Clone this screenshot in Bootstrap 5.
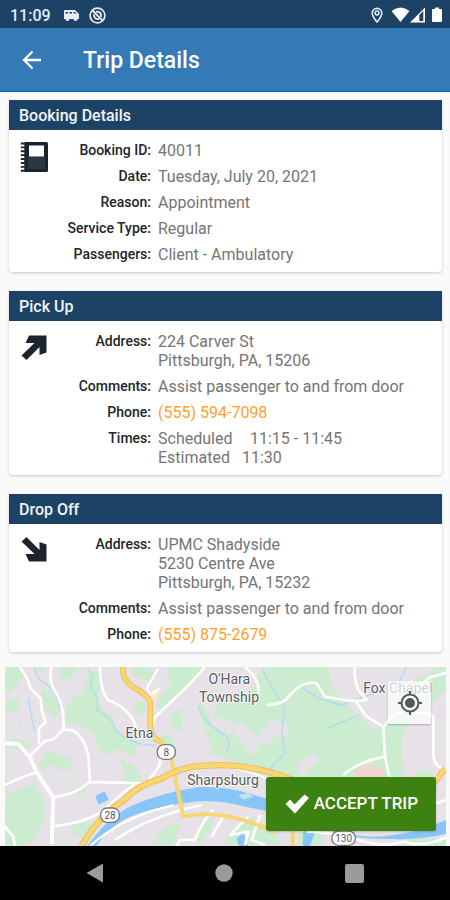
<!DOCTYPE html>
<html lang="en">
<head>
<meta charset="utf-8">
<meta name="viewport" content="width=device-width, initial-scale=1">
<title>Trip Details</title>
<link href="https://cdn.jsdelivr.net/npm/bootstrap@5.3.0/dist/css/bootstrap.min.css" rel="stylesheet">
<style>
body { font-family: Roboto, "Liberation Sans", sans-serif; font-size: 16px; line-height: 19px; background: #fafafa; color: #757575; }
svg { display: block; }
.status-bar { background: #1c4366; color: #fff; height: 28px; padding: 2px 8px 0 10px; }
.status-bar .clock { font-size: 16px; font-weight: 500; color: #e3ebf2; }
.notices { margin-left: 12px; gap: 9px; }
.signals { gap: 6px; }
.app-bar { background: #337ab7; height: 64px; padding: 0 20px; border-bottom: 1px solid #1766aa; gap: 39px; }
.app-bar h1 { font-size: 23px; line-height: 28px; padding-top: 2px; font-weight: 500; color: #fff; }
.trip-list { padding: 8px 8px 15px 9px; gap: 19px; }
.trip-card { border: 0; border-radius: 4px; box-shadow: 0 1px 3px rgba(0,0,0,.2); }
.trip-card .card-header { background: #1c4366; color: #f1f5f9; border: 0; border-radius: 0; font-size: 16px; line-height: 20px; padding: 6px 10px 4px; }
.trip-card .card-body { padding: 11px 8px 8px 10px; }
.card-icon { width: 32px; }
.detail-list { gap: 7px; }
.detail-list dt { width: 102px; padding-right: 2px; text-align: right; font-size: 14px; font-weight: 500; color: #212529; }
.detail-row { gap: 5px; }
.detail-list dd, .detail-list dt { margin: 0; }
.phone-link { color: #ffa02f; text-decoration: none; }
.time-name { display: inline-block; width: 84px; }
.time-name.full { width: 92px; }
.map-area { margin: 0 4px 0 5px; min-height: 179px; }
.map-drawing { width: 100%; min-height: 179px; }
.locate-btn { top: 14px; right: 15px; width: 43px; height: 43px; padding: 0; border: 0; border-radius: 2px; background: rgba(255,255,255,.72); box-shadow: 0 1px 2px rgba(0,0,0,.25); }
.accept-btn { right: 10px; bottom: 15px; height: 54px; padding: 0 18px; gap: 4px; border: 0; border-radius: 3px; background: #3d8111; color: #fff; font-size: 17px; font-weight: 500; box-shadow: 0 1px 2px rgba(0,0,0,.2); }
.accept-btn:hover { background: #34700e; color: #fff; }
.system-nav { background: #000; height: 54px; padding: 0 30px; }
.bare-btn { background: none; border: 0; padding: 0; }
</style>
<script src="https://cdn.jsdelivr.net/npm/bootstrap@5.3.0/dist/js/bootstrap.bundle.min.js"></script>
</head>
<body class="d-flex flex-column min-vh-100">
<div class="status-bar d-flex align-items-center justify-content-between">
  <div class="d-flex align-items-center">
    <span class="clock">11:09</span>
    <div class="notices d-flex align-items-center">
      <svg width="17" height="13" viewBox="0 0 17 13" aria-hidden="true"><path fill="#e8eef4" fill-rule="evenodd" d="M2 1h10l4 4v5h-1.500a2 2 0 0 1-4 0H6.500a2 2 0 0 1-4 0H1V2a1 1 0 0 1 1-1zM2.500 3v1.500H5V3zm4 0v1.500H9V3zm4 0v1.500h3L12 3z"/></svg>
      <svg width="17" height="17" viewBox="0 0 17 17" fill="none" stroke="#e8eef4" aria-hidden="true"><circle cx="8.500" cy="8.500" r="7.400" stroke-width="1.700"/><path stroke-width="1.900" d="M3.500 3.500l10 10M5 7.500a4 4 0 0 0 5 4.500M7 4.800a4 4 0 0 1 5 5"/></svg>
    </div>
  </div>
  <div class="signals d-flex align-items-center">
    <svg width="14" height="17" viewBox="0 0 14 17" fill="none" stroke="#e8eef4" aria-hidden="true"><path stroke-width="1.600" d="M6 15C4 12.500 1.200 9.300 1.200 6.200a4.800 4.800 0 0 1 9.600 0c0 3.100-2.800 6.300-4.800 8.800z"/><circle cx="6" cy="6" r="1.900" stroke-width="1.500"/></svg>
    <svg width="35" height="16" viewBox="0 0 35 16" aria-hidden="true"><path fill="#fff" fill-rule="evenodd" d="M0.500 4Q9.500-3 18.500 4L9.500 15zM19 15.500L34 .5v15zM28.300 8v6h4V4z"/></svg>
    <svg width="10" height="16" viewBox="0 0 10 16" aria-hidden="true"><path fill="#fff" d="M1 2h2V.500h4V2h2q1 0 1 1v11q0 1-1 1H1q-1 0-1-1V3q0-1 1-1z"/></svg>
  </div>
</div>
<header class="app-bar d-flex align-items-center">
  <button class="bare-btn" type="button" aria-label="Back"><svg width="24" height="24" viewBox="0 0 24 24" fill="none" stroke="#fff" stroke-width="2.300"><path d="M21 12H4.500M12.500 3.500L4 12l8.500 8.500"/></svg></button>
  <h1 class="mb-0">Trip Details</h1>
</header>
<main class="d-flex flex-column flex-grow-1">
  <div class="trip-list d-flex flex-column">
    <section class="card trip-card">
      <h2 class="card-header m-0">Booking Details</h2>
      <div class="card-body d-flex">
        <div class="card-icon flex-shrink-0"><svg width="30" height="32" viewBox="0 0 30 32" aria-hidden="true"><rect x="5" y="1" width="24" height="30" rx="1.500" fill="#1c252e"/><rect x="10" y="4.500" width="15" height="11" fill="#fff"/><path fill="#2b3843" d="M9 16h17v12H9z"/><path d="M4.500 1v30" stroke="#fff" stroke-width="2"/><path d="M3.800 1.500v29.500" stroke="#1c252e" stroke-width="4" stroke-dasharray="1.900 2"/><path d="M7 1.500v29" stroke="#1c252e" stroke-width="3"/></svg></div>
        <dl class="detail-list d-flex flex-column flex-grow-1 m-0">
          <div class="detail-row d-flex"><dt>Booking ID:</dt><dd>40011</dd></div>
          <div class="detail-row d-flex"><dt>Date:</dt><dd>Tuesday, July 20, 2021</dd></div>
          <div class="detail-row d-flex"><dt>Reason:</dt><dd>Appointment</dd></div>
          <div class="detail-row d-flex"><dt>Service Type:</dt><dd>Regular</dd></div>
          <div class="detail-row d-flex"><dt>Passengers:</dt><dd>Client - Ambulatory</dd></div>
        </dl>
      </div>
    </section>
    <section class="card trip-card">
      <h2 class="card-header m-0">Pick Up</h2>
      <div class="card-body d-flex">
        <div class="card-icon flex-shrink-0"><svg width="30" height="32" viewBox="0 0 30 32" aria-hidden="true"><path fill="#1c252e" d="M10 3.500h17.500v17l-7 2.500v-8L7.500 28 2.500 23.500 15.500 11H6.500z"/></svg></div>
        <dl class="detail-list d-flex flex-column flex-grow-1 m-0">
          <div class="detail-row d-flex"><dt>Address:</dt><dd>224 Carver St<br>Pittsburgh, PA, 15206</dd></div>
          <div class="detail-row d-flex"><dt>Comments:</dt><dd>Assist passenger to and from door</dd></div>
          <div class="detail-row d-flex"><dt>Phone:</dt><dd><a class="phone-link" href="tel:5555947098">(555) 594-7098</a></dd></div>
          <div class="detail-row d-flex"><dt>Times:</dt><dd><span class="time-name full">Scheduled</span>11:15 - 11:45<br><span class="time-name">Estimated</span>11:30</dd></div>
        </dl>
      </div>
    </section>
    <section class="card trip-card">
      <h2 class="card-header m-0">Drop Off</h2>
      <div class="card-body d-flex">
        <div class="card-icon flex-shrink-0"><svg width="30" height="32" viewBox="0 0 30 32" aria-hidden="true"><path fill="#1c252e" d="M10 26.500h17.500v-17l-7-2.500v8L7.500 2 2.500 6.500 15.500 19H6.500z"/></svg></div>
        <dl class="detail-list d-flex flex-column flex-grow-1 m-0">
          <div class="detail-row d-flex"><dt>Address:</dt><dd>UPMC Shadyside<br>5230 Centre Ave<br>Pittsburgh, PA, 15232</dd></div>
          <div class="detail-row d-flex"><dt>Comments:</dt><dd>Assist passenger to and from door</dd></div>
          <div class="detail-row d-flex"><dt>Phone:</dt><dd><a class="phone-link" href="tel:5558752679">(555) 875-2679</a></dd></div>
        </dl>
      </div>
    </section>
  </div>
  <div class="map-area position-relative flex-grow-1 d-flex">
    <svg class="map-drawing" viewBox="15 21 1323 537" preserveAspectRatio="xMidYMid slice" role="img" aria-label="Map of the trip area">
      <rect x="0" y="0" width="1400" height="600" fill="#e6e2e7"/>
      <g fill="#cbecce">
        <path d="M15 21h55l5 25-25 30-20 20-15-3zM18 125l35-10 5 30-25 15-18-8zM15 250l35-15 45 20-25 22-25-12-30 5zM50 185l12-4 5 12-12 3zM128 88l30 10 22 60-18 18-25-30-15-30zM105 21h35l-15 20zM178 21l55 0-10 20-35 25zM240 30l55 5 8 40-12 40 22 40 30 20 10 50-30 60-28-18-15-50-40-20-45-10 5-50 20-22 30-25 15-45-30-30z"/>
        <path d="M130 285l20-15 25 15 40 10-4 35-30 5-15-22-35 15-15-10zM25 360l-10 20v20zM18 405l50-20 35-15 25 45 10 55-35 70-40 18H15V470zM228 385l35-10-10 25-20 5zM220 490l50-2 15 20-30 25-40-15zM362 300l35 15 32 42-20 25-45-10 15-22zM315 225l30-25 30 35 40 10-15 45-45-25-25 20zM390 21h50l30 25-20 20-50-20zM400 130l35-8 5 35-25 10z"/>
        <path d="M500 21h115l-55 60-80 80-10-30 40-55zM510 165l40-20-5 70-30-10zM485 225l30 0 10 50-20 10zM595 130l20 5 20 60 40 30 30 20v60l-60-20-40-100zM655 130l45-55 60-15 50-39h175l10 60 50 60 80 70 60-50 40-90 113-60v80l-70 60-60 70 0 120-70 70-70-10-80-50-30 10-40 0-230-60-60-20 30-40 30-60-50-10z"/>
        <path d="M455 555l40-55 50-10-30 65zM600 490l35-15 5 20-40 55-20-10zM1205 550l40-20 95 10v20h-135zM1250 325l60 20-40 20h-30zM760 470l60 45 20 40H675l15-45zM900 510l60 10 10 35h-75zM1305 70l35-30v50z"/>
      </g>
      <g fill="#e6e2e7">
        <path d="M755 290l-55-75-30 20 15-50 40 5 50 40 35-50 50 10 5 45-35-15-20 35-25-10zM895 310l30-22 20-8 12 20-35 30-12 18-20-8zM675 21h75l20 50-40 40-55 10zM1205 230l90-15 30-60 15 5v170l-80 0-55-30z"/>
      </g>
      <path fill="#f3d5d0" d="M1060 335q50-35 80-10 20 20 5 35h-80z"/>
      <path fill="#f5edc8" d="M455 90l25-5-10 35-15-5z"/>
      <path fill="#88c5f8" d="M262 558q55-80 130-119 90-40 200-57 80-5 160 20l120 36v29L740 441q-85-24-160-16-130 17-200 50-55 27-92 85zM1000 510q90 30 180 15 80-10 158-45v42q-80 18-160 15-100 0-178-15zM286 408l28-15 12 26-31 15zM910 515l40-10-20 53h-22zM710 535l20-15 15 40h-28z"/>
      <path fill="#c4e1ed" d="M715 405l30-6 15 12-30 8z"/>
      <path fill="none" stroke="#b4d8f2" stroke-width="4" d="M105 21q0 30 30 50 35 20 45 80M265 21q20 40 5 60 30 30 20 70 50 20 55 60 60 50 125 45M85 115q10 60 20 100M595 135q10 50 80 90 20 20 5 50M785 25q25 50 70 115l-10 70 10 70-60 60M895 75l60 40 70 20 110-40M980 205l50-20 50-20M1220 21l-30 60 25 55"/>
      <g fill="none" stroke="#fff" stroke-width="8" stroke-linejoin="round">
        <path d="M60 21l22 35 10 30 30 30 3 35 12 35-20 20v45M155 21q-10 30 5 65 35 45 30 122l-30 30-25 5-45 45M190 208l30 3q35 25 45 75l5 80M300 21q0 70 25 100 70 25 85 90M615 21l-65 70-85 80-15 50M15 375q50-25 90-37M163 412q65-10 107-46l170 4 40-55v-45M165 498q95-10 150-50 50-50 90-75M15 500l25 30 5 28"/>
        <path stroke-width="12" d="M15 250l40 2 35 40 20 45 50 75-5 140"/>
        <path stroke-width="7" d="M345 540q100-70 260-105M270 558q100-90 250-122M480 85l-30 20-10-20 35-60"/>
        <path d="M735 21q45 35 40 80M800 135q50 0 70-30 40-45 80-35l25 40 60 10q25 5 65 0l-25-30q-15-40-10-70M1065 120q20 30 35 50l50 30 5 90 15 70M1150 202q20-35 70-55l20-55 50-40 55-15M1030 345q45-40 125-55M1240 160l50 0 10 10v120q5 30 30 35M1290 435l50-15M1310 340l-15 60"/>
        <path d="M640 450q-35 35-55 90h-45l-10 18M675 460l-40 70M745 470l-55 55 55-10-10 40M780 465l-25 75 40 15M920 515q70 0 140 20 80 30 150 10 70 20 140-20"/>
        <path stroke-width="5" d="M600 320q150-10 275 80"/>
      </g>
      <g fill="none" stroke-linejoin="round">
        <path stroke="#efb951" stroke-width="17" d="M368 21q0 40 30 60 50 25 53 50v70q0 35 35 45"/>
        <path stroke="#f8d672" stroke-width="12" d="M368 21q0 40 30 60 50 25 53 50v70q0 35 35 45l30 60 34 164q60-13 125-3 90 20 150 50M878 505v53"/>
        <path stroke="#e9b64f" stroke-width="19" d="M245 558q50-90 130-140 40-45 110-62 60-40 150-40 90-5 190 25 120 40 230 90 110 30 220-30l60-75"/>
        <path stroke="#f8d672" stroke-width="14" d="M245 558q50-90 130-140 40-45 110-62 60-40 150-40 90-5 190 25 120 40 230 90 110 30 220-30l60-75"/>
      </g>
      <g fill="#fff" stroke="#77797c" stroke-width="4">
        <rect x="472" y="254" width="54" height="44" rx="20"/><rect x="302" y="444" width="56" height="43" rx="19"/><rect x="996" y="513" width="70" height="43" rx="20"/>
      </g>
      <g font-family="Roboto, sans-serif" fill="#55585c" text-anchor="middle">
        <g font-size="30"><text x="499" y="287">8</text><text x="330" y="476">28</text><text x="1031" y="546">130</text></g>
        <g font-size="42" stroke="#fff" stroke-width="5" paint-order="stroke">
          <text x="418" y="235">Etna</text><text x="688" y="72">O'Hara</text><text x="687" y="125">Township</text><text x="669" y="376">Sharpsburg</text><text x="1193" y="98">Fox Chapel</text>
        </g>
      </g>
    </svg>
    <button class="locate-btn position-absolute d-flex align-items-center justify-content-center" type="button" aria-label="Show my location"><svg width="26" height="26" viewBox="0 0 26 26" fill="none" stroke="#55595c" stroke-width="2"><circle cx="13" cy="13" r="8.500"/><circle cx="13" cy="13" r="4" fill="#55595c"/><path d="M13 1v4M13 21v4M1 13h4M21 13h4"/></svg></button>
    <button class="btn accept-btn position-absolute d-flex align-items-center" type="button"><svg width="26" height="22" viewBox="0 0 26 22" aria-hidden="true"><path fill="#fff" d="M1.500 11l4.500-4.500 4.500 5L20.500 1.500l4.500 3.500L11 20.500z"/></svg>ACCEPT TRIP</button>
  </div>
</main>
<nav class="system-nav d-flex justify-content-around align-items-center" aria-label="System">
  <button class="bare-btn" type="button" aria-label="Back"><svg width="18" height="20" viewBox="0 0 18 20"><path fill="#9b9b9b" d="M17 .500v19L.500 10z"/></svg></button>
  <button class="bare-btn" type="button" aria-label="Home"><svg width="18" height="18" viewBox="0 0 18 18"><circle cx="9" cy="9" r="8.700" fill="#9b9b9b"/></svg></button>
  <button class="bare-btn" type="button" aria-label="Recent apps"><svg width="19" height="19" viewBox="0 0 19 19"><rect width="19" height="19" rx="2" fill="#9b9b9b"/></svg></button>
</nav>
</body>
</html>
